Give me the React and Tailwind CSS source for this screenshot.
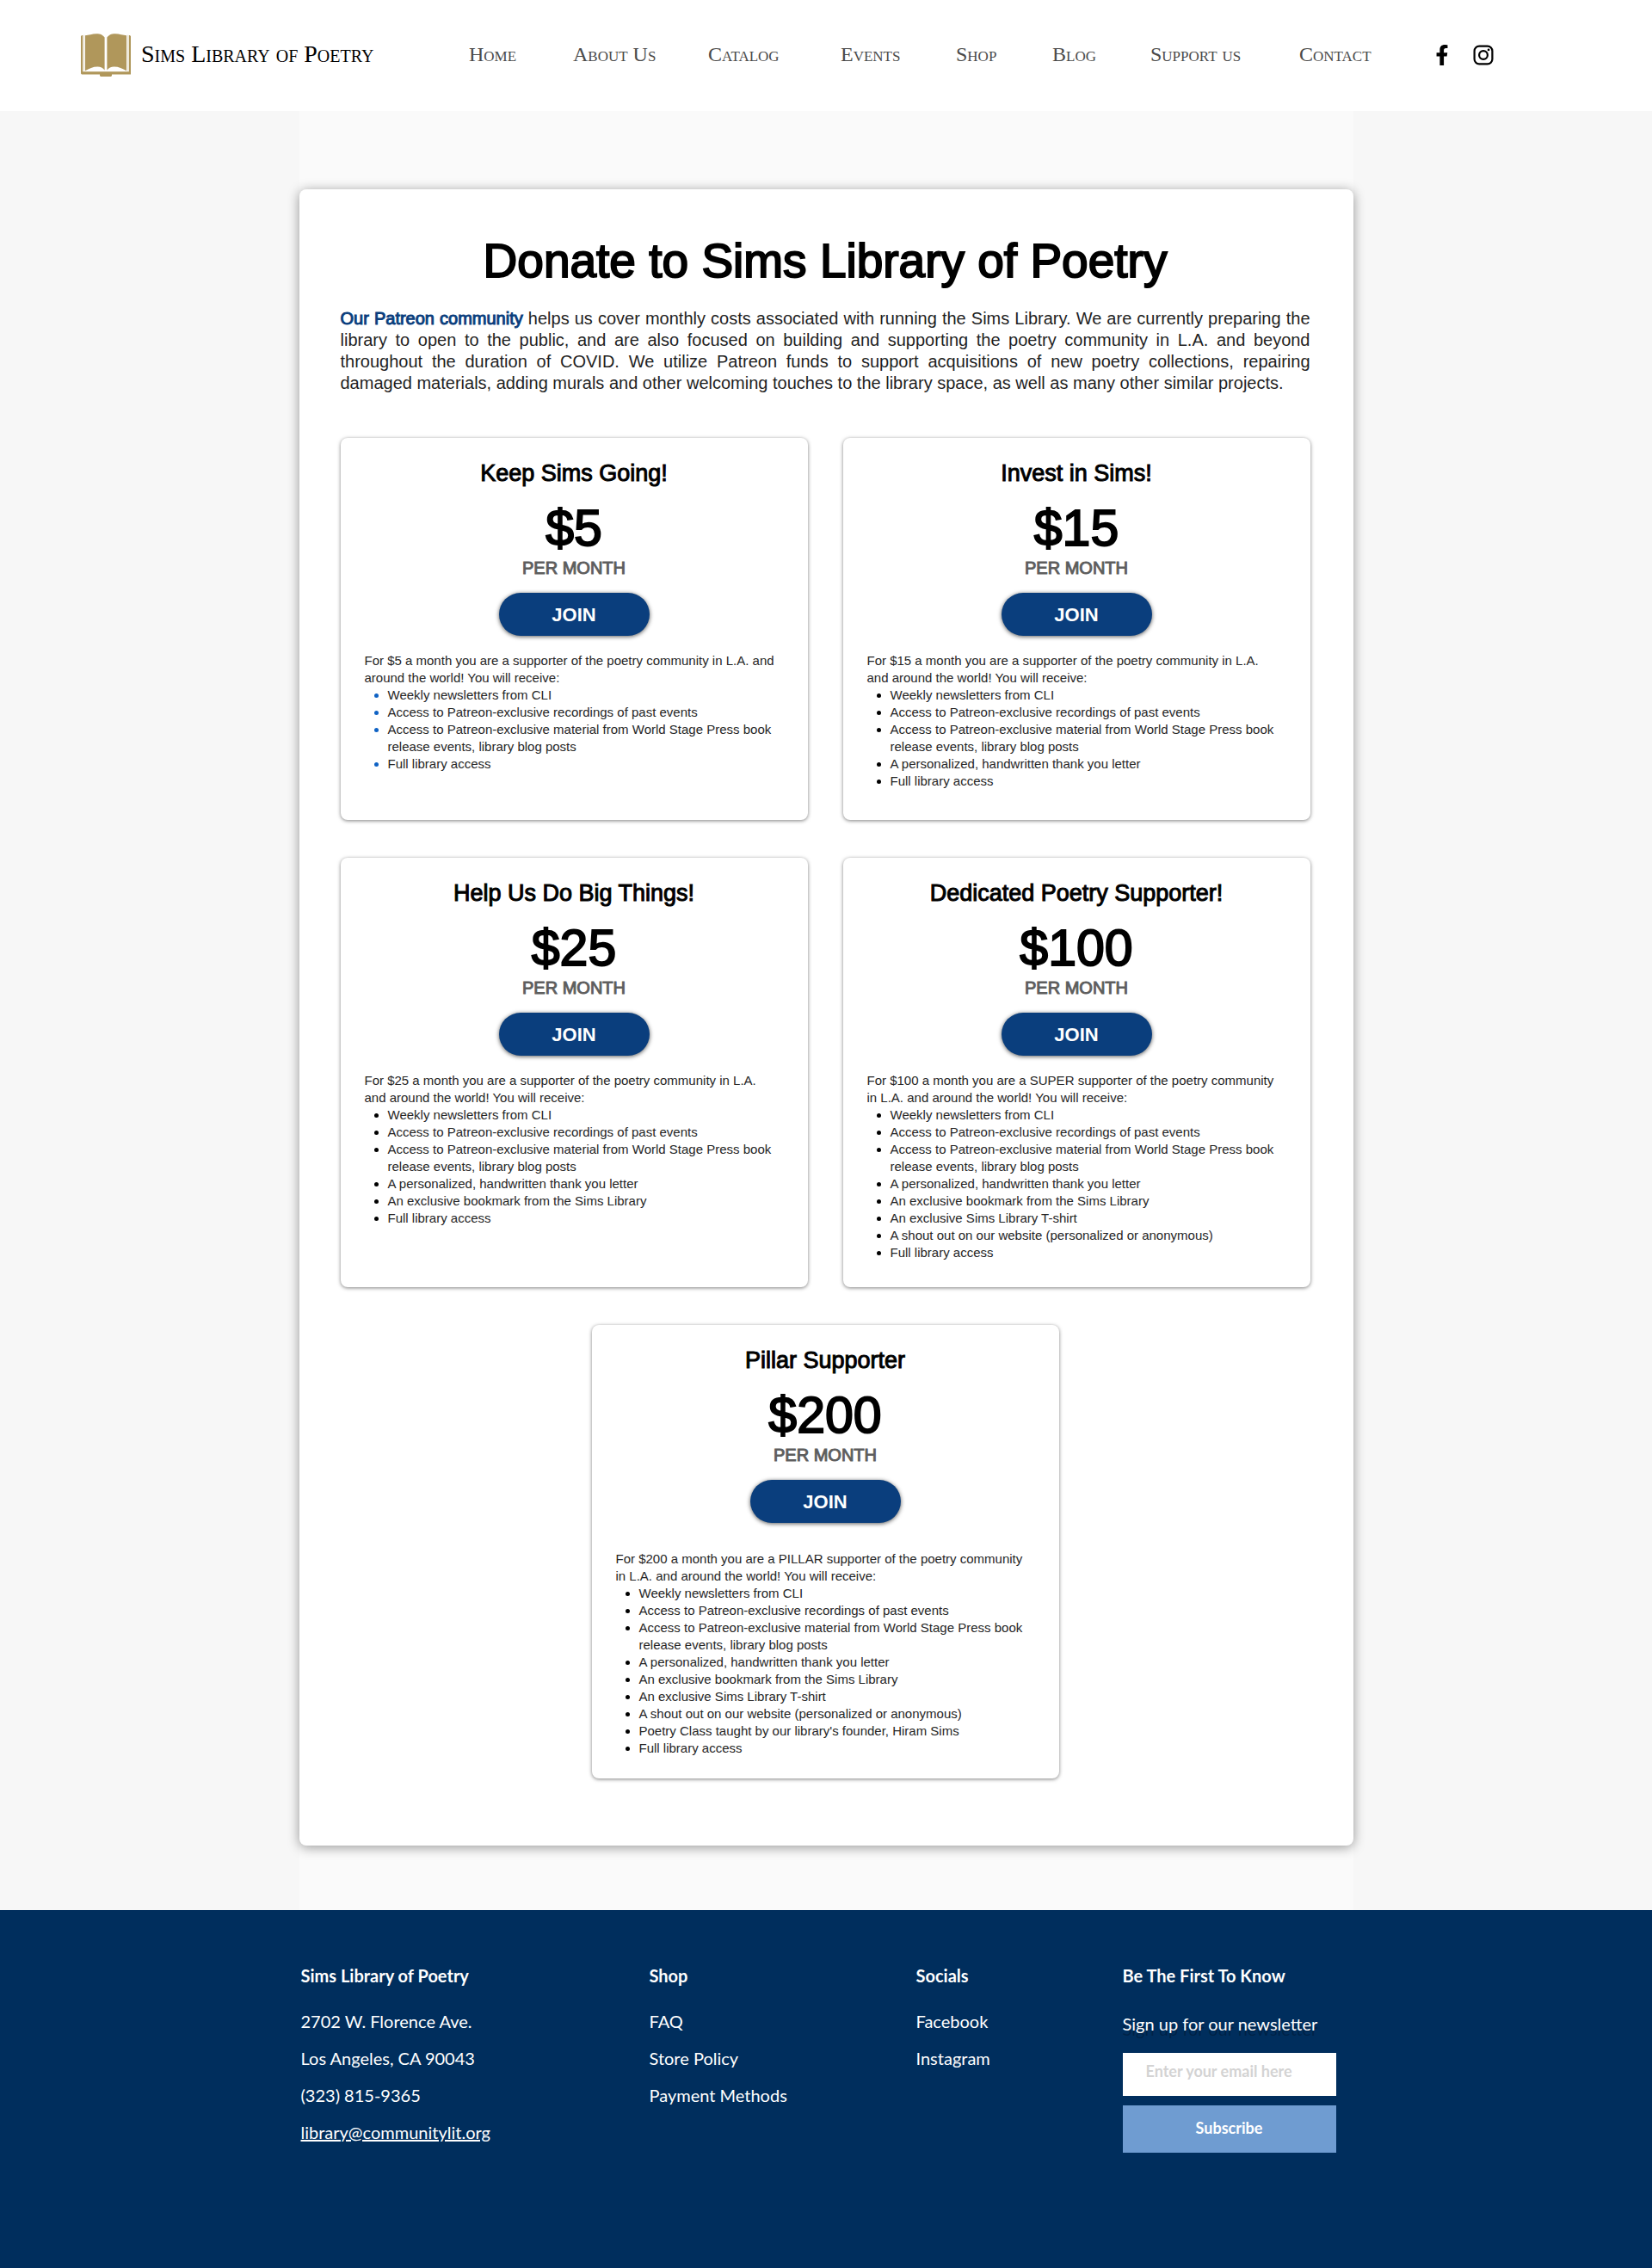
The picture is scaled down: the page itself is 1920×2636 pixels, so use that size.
import { FaFacebookF } from "react-icons/fa";

const NAV = ["Home", "About Us", "Catalog", "Events", "Shop", "Blog", "Support us", "Contact"];

const BASE = [
  "Weekly newsletters from CLI",
  "Access to Patreon-exclusive recordings of past events",
  "Access to Patreon-exclusive material from World Stage Press book release events, library blog posts",
];
const LETTER = "A personalized, handwritten thank you letter";
const BOOKMARK = "An exclusive bookmark from the Sims Library";
const SHIRT = "An exclusive Sims Library T-shirt";
const SHOUT = "A shout out on our website (personalized or anonymous)";
const ACCESS = "Full library access";

const TIERS = [
  {
    name: "Keep Sims Going!",
    price: "$5",
    intro: ["For $5 a month you are a supporter of the poetry community in L.A. and", "around the world! You will receive:"],
    perks: [...BASE, ACCESS],
    size: "min-h-[444px]",
    marker: "marker:text-[#0f62c4]",
  },
  {
    name: "Invest in Sims!",
    price: "$15",
    intro: ["For $15 a month you are a supporter of the poetry community in L.A.", "and around the world! You will receive:"],
    perks: [...BASE, LETTER, ACCESS],
    size: "min-h-[444px]",
  },
  {
    name: "Help Us Do Big Things!",
    price: "$25",
    intro: ["For $25 a month you are a supporter of the poetry community in L.A.", "and around the world! You will receive:"],
    perks: [...BASE, LETTER, BOOKMARK, ACCESS],
    size: "min-h-[499px]",
  },
  {
    name: "Dedicated Poetry Supporter!",
    price: "$100",
    intro: ["For $100 a month you are a SUPER supporter of the poetry community", "in L.A. and around the world! You will receive:"],
    perks: [...BASE, LETTER, BOOKMARK, SHIRT, SHOUT, ACCESS],
    size: "min-h-[499px]",
  },
  {
    name: "Pillar Supporter",
    price: "$200",
    intro: ["For $200 a month you are a PILLAR supporter of the poetry community", "in L.A. and around the world! You will receive:"],
    perks: [...BASE, LETTER, BOOKMARK, SHIRT, SHOUT, "Poetry Class taught by our library's founder, Hiram Sims", ACCESS],
    size: "min-h-[527px] col-span-2 w-[543px] justify-self-center",
    textGap: "mt-8",
  },
];

function BookLogo() {
  return (
    <svg width="58" height="50" viewBox="0 0 58 50" fill="#b0975b" className="shrink-0" aria-hidden="true">
      <path d="M0 3.2 L1 2 H2.2 V44.3 H55.8 V2 H57 L58 3.2 V47.4 H36 V49 L35 50 H23 L22 49 V47.4 H1 L0 46.6Z" />
      <path d="M3.2 1.8 H4.2 V43.6 H3.2Z M53.8 1.8 H54.8 V43.6 H53.8Z" opacity="0.35" />
      <path d="M5 2.2 C9 2.2 13 .4 18 .3 C23 .3 25.5 1.8 27.6 4.6 V42.4 C25.5 39.5 23 38.4 19.5 38.4 C14 38.4 9.5 40.5 5 43.2Z" />
      <path d="M53 2.2 C49 2.2 45 .4 40 .3 C35 .3 32.5 1.8 30.4 4.6 V42.4 C32.5 39.5 35 38.4 38.5 38.4 C44 38.4 48.5 40.5 53 43.2Z" />
    </svg>
  );
}

function InstagramIcon() {
  return (
    <svg width="24" height="24" viewBox="0 0 24 24" fill="none" stroke="#000" strokeWidth="2.2" aria-hidden="true">
      <rect x="1.6" y="1.6" width="20.8" height="20.8" rx="5.6" />
      <circle cx="12" cy="12" r="4.9" />
      <circle cx="18.1" cy="5.9" r="1.4" fill="#000" stroke="none" />
    </svg>
  );
}

function TierCard({ tier }) {
  return (
    <article className={`flex flex-col items-center rounded-lg bg-white px-7 pt-[25px] pb-6 shadow-[0_1px_4px_rgba(0,0,0,0.5)] ${tier.size}`}>
      <h2 className="text-[27px] leading-8 [-webkit-text-stroke:1px_black]">{tier.name}</h2>
      <p className="mt-[18px] text-[59px] leading-[60px] [-webkit-text-stroke:2px_black]">{tier.price}</p>
      <p className="mt-1 text-xl leading-6 text-[#5e5e5e] [-webkit-text-stroke:1px_#5e5e5e]">PER MONTH</p>
      <button type="button" className="mt-[17px] h-[50px] w-[175px] cursor-pointer rounded-full bg-[#0a3e7d] text-[22px] font-bold text-white shadow-[0_1px_5px_rgba(0,0,0,0.65)]">
        JOIN
      </button>
      <div className={`self-stretch text-[15px] leading-5 text-[#262626] ${tier.textGap ?? "mt-[19px]"}`}>
        <p>
          {tier.intro[0]}
          <br />
          {tier.intro[1]}
        </p>
        <ul className={`list-disc pl-[27px] ${tier.marker ?? "marker:text-black"}`}>
          {tier.perks.map((perk) => (
            <li key={perk}>{perk}</li>
          ))}
        </ul>
      </div>
    </article>
  );
}

function FooterColumn({ title, children }) {
  return (
    <section>
      <h3 className="font-bold leading-6">{title}</h3>
      {children}
    </section>
  );
}

export default function App() {
  return (
    <div className="w-full bg-[#f7f7f7] font-['Liberation_Sans',sans-serif] text-black">
      <header className="flex h-[129px] items-center bg-white pb-0.5 pl-[94px] font-['Liberation_Serif',serif]">
        <a href="#home" className="flex w-[451px] shrink-0 items-center gap-3 text-[28px]">
          <BookLogo />
          <span className="pb-0.5 whitespace-nowrap [font-variant:small-caps]">Sims Library of Poetry</span>
        </a>
        <nav className="grid grid-cols-[121px_157px_154px_134px_112px_114px_173px_94px] pb-0.5 text-2xl whitespace-nowrap text-[#4a4a4a] [font-variant:small-caps]">
          {NAV.map((item) => (
            <a key={item} href={`#${item.toLowerCase().replace(" ", "-")}`}>
              {item}
            </a>
          ))}
        </nav>
        <div className="ml-[60px] flex items-center gap-6">
          <a href="#facebook" aria-label="Facebook">
            <FaFacebookF size={24} color="#000" />
          </a>
          <a href="#instagram" aria-label="Instagram">
            <InstagramIcon />
          </a>
        </div>
      </header>

      <main className="mx-auto max-w-[1225px] bg-[#fafafa] pt-[91px] pb-[75px]">
        <div className="rounded-lg bg-white pt-[53px] pr-[50px] pb-[78px] pl-12 shadow-[0_2px_14px_rgba(0,0,0,0.4)]">
          <h1 className="text-center text-[55px] leading-[60px] [-webkit-text-stroke:2px_black]">Donate to Sims Library of Poetry</h1>
          <p className="mt-[25px] text-justify text-xl leading-[25px] text-[#1f1f1f]">
            <a href="#patreon" className="text-[#0a3e7d] [-webkit-text-stroke:1px_#0a3e7d]">
              Our Patreon community
            </a>{" "}
            helps us cover monthly costs associated with running the Sims Library. We are currently preparing the library to open to the
            public, and are also focused on building and supporting the poetry community in L.A. and beyond throughout the duration of
            COVID. We utilize Patreon funds to support acquisitions of new poetry collections, repairing damaged materials, adding murals
            and other welcoming touches to the library space, as well as many other similar projects.
          </p>
          <div className="mt-[51px] grid grid-cols-2 gap-x-[41px] gap-y-11">
            {TIERS.map((tier) => (
              <TierCard key={tier.name} tier={tier} />
            ))}
          </div>
        </div>
      </main>

      <footer className="bg-[#002e5d] pt-16 pb-[134px] font-['Lato',sans-serif] text-xl text-white">
        <div className="mx-auto grid max-w-[1225px] grid-cols-[405px_310px_240px_1fr] pl-0.5">
          <FooterColumn title="Sims Library of Poetry">
            <address className="mt-5 leading-[43px] not-italic">
              <p>2702 W. Florence Ave.</p>
              <p>Los Angeles, CA 90043</p>
              <p>(323) 815-9365</p>
              <a href="mailto:library@communitylit.org" className="underline">
                library@communitylit.org
              </a>
            </address>
          </FooterColumn>
          <FooterColumn title="Shop">
            <ul className="mt-5 leading-[43px]">
              <li><a href="#faq">FAQ</a></li>
              <li><a href="#store-policy">Store Policy</a></li>
              <li><a href="#payment-methods">Payment Methods</a></li>
            </ul>
          </FooterColumn>
          <FooterColumn title="Socials">
            <ul className="mt-5 leading-[43px]">
              <li><a href="#facebook">Facebook</a></li>
              <li><a href="#instagram">Instagram</a></li>
            </ul>
          </FooterColumn>
          <FooterColumn title="Be The First To Know">
            <form className="mt-8 flex w-[248px] flex-col" onSubmit={(e) => e.preventDefault()}>
              <label htmlFor="email" className="leading-6 [text-shadow:0_6px_0_rgba(0,0,0,0.25)]">
                Sign up for our newsletter
              </label>
              <input
                id="email"
                type="email"
                placeholder="Enter your email here"
                className="mt-[22px] h-[50px] bg-white px-[27px] pb-2 text-lg font-bold text-black placeholder:text-[#d3d3d3]"
              />
              <button type="submit" className="mt-[11px] h-[55px] cursor-pointer bg-[#6f9cd1] pb-1 text-lg font-bold">
                Subscribe
              </button>
            </form>
          </FooterColumn>
        </div>
      </footer>
    </div>
  );
}
